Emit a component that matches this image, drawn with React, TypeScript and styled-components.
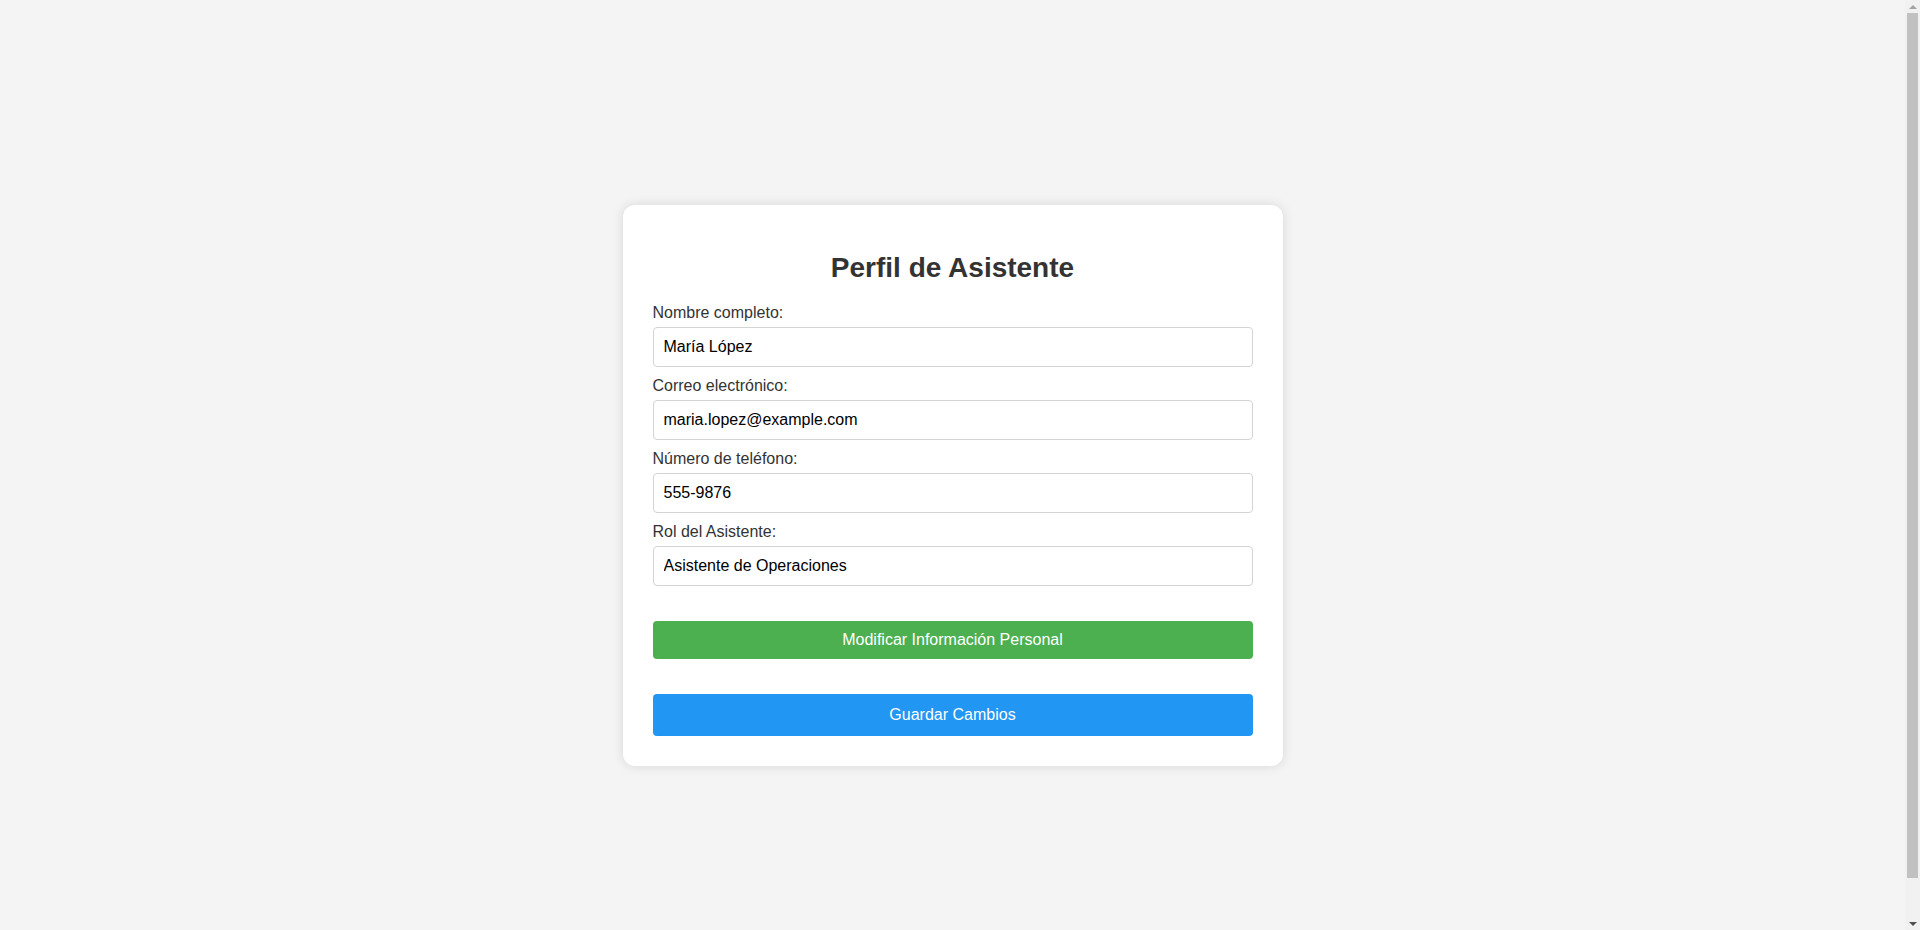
import React, { useState } from 'react';
import styled, { createGlobalStyle } from 'styled-components';

const GlobalStyle = createGlobalStyle`
    body {
        margin: 0;
        /* right side keeps room for the page scrollbar */
        padding: 20px 35px 20px 20px;
        height: 100vh;
        background-color: #f4f4f4;
        font-family: "Liberation Sans", Arial, sans-serif;
        display: flex;
        justify-content: center;
        align-items: center;
    }
`;

const Card = styled.div`
    width: 600px;
    padding: 30px;
    background-color: #ffffff;
    border-radius: 12px;
    box-shadow: 0 0 12px rgba(0, 0, 0, 0.12);
`;

const Title = styled.h2`
    margin: 17px 0 20px;
    text-align: center;
    font-size: 28px;
    font-weight: bold;
    color: #333;
`;

const Field = styled.div`
    margin-bottom: 10px;
`;

const Label = styled.label`
    display: block;
    margin-bottom: 5px;
    font-size: 16px;
    color: #333;
`;

const Input = styled.input`
    display: block;
    width: 100%;
    box-sizing: border-box;
    padding: 10px;
    font-family: "Liberation Sans", Arial, sans-serif;
    font-size: 16px;
    line-height: 18px;
    color: #000;
    border: 1px solid #d4d4d4;
    border-radius: 4px;
    outline: none;
`;

// margin-top collapses with the field's margin-bottom, so it carries the whole gap
const Button = styled.button<{ $color: string; $pad: number }>`
    display: block;
    width: 100%;
    margin-top: 35px;
    padding: ${({ $pad }) => $pad}px;
    font-family: "Liberation Sans", Arial, sans-serif;
    font-size: 16px;
    line-height: 18px;
    color: #fff;
    background-color: ${({ $color }) => $color};
    border: none;
    border-radius: 4px;
    cursor: pointer;
`;

// page scrollbar, drawn over the right edge like the browser's own
const ScrollTrack = styled.div`
    position: fixed;
    top: 0;
    right: 0;
    width: 15px;
    height: 100vh;
    background-color: #f1f1f1;
    display: flex;
    flex-direction: column;
    align-items: center;
`;

const ScrollArrow = styled.div<{ $down?: boolean }>`
    flex: 0 0 13px;
    display: flex;
    align-items: center;
    justify-content: center;
    &::before {
        content: '';
        border-left: 4px solid transparent;
        border-right: 4px solid transparent;
        ${({ $down }) => ($down ? 'border-top: 4px solid #505050;' : 'border-bottom: 4px solid #a3a3a3;')}
    }
`;

const ScrollThumb = styled.div`
    width: 11px;
    height: 865px;
    background-color: #c1c1c1;
`;

const ScrollRest = styled.div`
    flex: 1;
`;

const fields = [
    { key: 'name', label: 'Nombre completo:', value: 'María López' },
    { key: 'email', label: 'Correo electrónico:', value: 'maria.lopez@example.com' },
    { key: 'phone', label: 'Número de teléfono:', value: '555-9876' },
    { key: 'role', label: 'Rol del Asistente:', value: 'Asistente de Operaciones' },
];

const App: React.FC = () => {
    const [values, setValues] = useState<Record<string, string>>(
        Object.fromEntries(fields.map((f) => [f.key, f.value]))
    );

    return (
        <>
            <GlobalStyle />
            <Card>
                <Title>Perfil de Asistente</Title>
                {fields.map((f) => (
                    <Field key={f.key}>
                        <Label htmlFor={f.key}>{f.label}</Label>
                        <Input
                            id={f.key}
                            value={values[f.key]}
                            onChange={(e) => setValues({ ...values, [f.key]: e.target.value })}
                        />
                    </Field>
                ))}
                <Button $color="#4caf50" $pad={10}>
                    Modificar Información Personal
                </Button>
                <Button $color="#2196f3" $pad={12}>
                    Guardar Cambios
                </Button>
            </Card>
            <ScrollTrack>
                <ScrollArrow />
                <ScrollThumb />
                <ScrollRest />
                <ScrollArrow $down />
            </ScrollTrack>
        </>
    );
};

export default App;
